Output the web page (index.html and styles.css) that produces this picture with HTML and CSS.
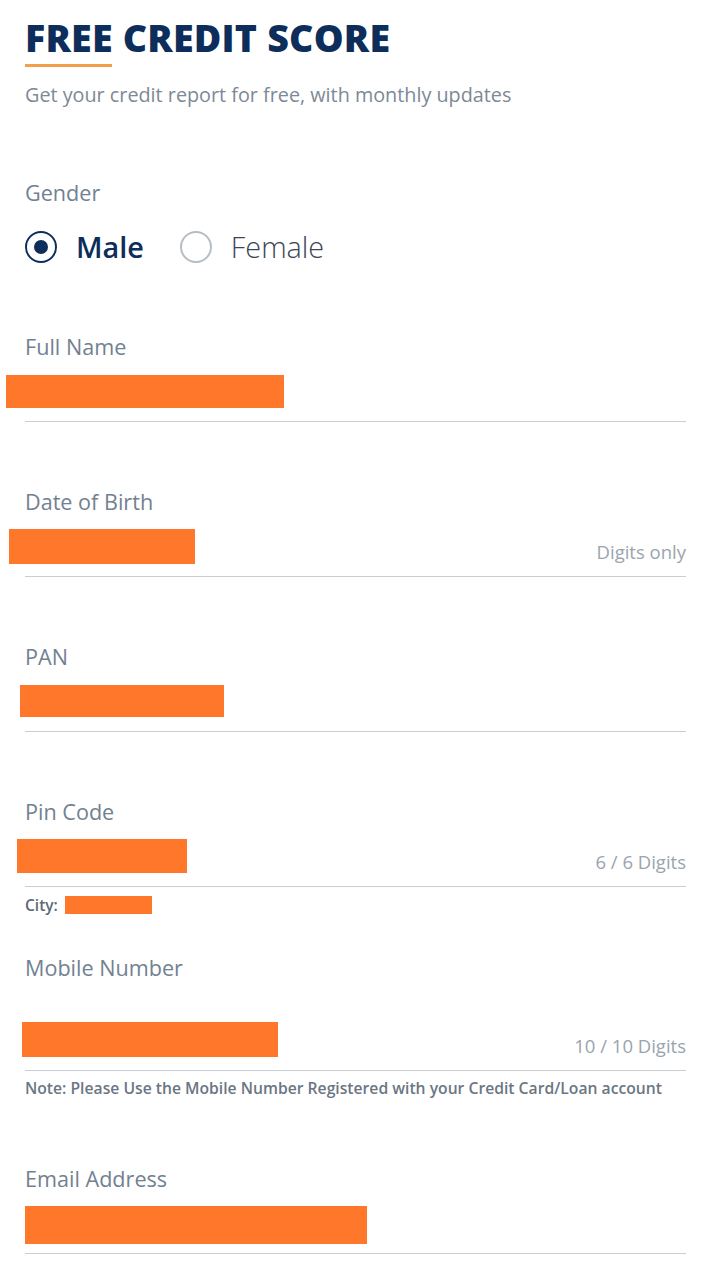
FILE: index.html
```html
<!DOCTYPE html>
<html lang="en">
<head>
  <meta charset="UTF-8" />
  <meta name="viewport" content="width=device-width, initial-scale=1.0" />
  <title>Free Credit Score</title>
  <link rel="stylesheet" href="styles.css">
</head>
<body>
  <h1 class="title">FREE CREDIT SCORE</h1>
  <div class="title-bar"></div>
  <p class="subtitle">Get your credit report for free, with monthly updates</p>

  <div class="label gender-label">Gender</div>
  <div class="radios">
    <label class="radio checked"><span class="dot"></span>Male</label>
    <label class="radio"><span class="dot"></span>Female</label>
  </div>

  <div class="field first">
    <div class="label">Full Name</div>
    <div class="row"><span class="redact r-name"></span></div>
  </div>

  <div class="field">
    <div class="label">Date of Birth</div>
    <div class="row"><span class="redact r-dob"></span><span class="hint">Digits only</span></div>
  </div>

  <div class="field">
    <div class="label">PAN</div>
    <div class="row"><span class="redact r-pan"></span></div>
  </div>

  <div class="field">
    <div class="label">Pin Code</div>
    <div class="row"><span class="redact r-pin"></span><span class="hint">6 / 6 Digits</span></div>
    <div class="city">City: <span class="redact r-city"></span></div>
  </div>

  <div class="field after-city">
    <div class="label">Mobile Number</div>
    <div class="row tall"><span class="redact r-mobile"></span><span class="hint">10 / 10 Digits</span></div>
    <div class="note">Note: Please Use the Mobile Number Registered with your Credit Card/Loan account</div>
  </div>

  <div class="field after-note">
    <div class="label">Email Address</div>
    <div class="row"><span class="redact r-email"></span></div>
  </div>
</body>
</html>
```

FILE: styles.css
```css
body {
  margin: 0;
  padding: 0 24px 0 25px;
  background: #ffffff;
  font-family: 'Open Sans', 'Noto Sans', sans-serif;
  color: #6e7c8a;
}
.title {
  margin: 0;
  padding-top: 14px;
  font-size: 37.6px;
  line-height: 48px;
  font-weight: 800;
  color: #0d2d5a;
  letter-spacing: 0.2px;
}
.title-bar {
  width: 87px;
  height: 3px;
  margin-top: 2px;
  background: #f0a04b;
}
.subtitle {
  margin: 14px 0 0;
  font-size: 19.8px;
  line-height: 28px;
  color: #7d8996;
}
.label {
  font-size: 21.6px;
  line-height: 28px;
  color: #728191;
}
.gender-label {
  margin-top: 70px;
}
.radios {
  display: flex;
  align-items: center;
  gap: 36px;
  margin-top: 20px;
}
.radio {
  display: flex;
  align-items: center;
  gap: 19px;
  font-size: 28.8px;
  line-height: 40px;
  font-weight: 300;
  color: #3a4654;
}
.radio .dot {
  width: 28px;
  height: 28px;
  border: 2px solid #b4bcc4;
  border-radius: 50%;
  display: flex;
  align-items: center;
  justify-content: center;
}
.radio.checked {
  font-weight: 600;
  color: #0d2d5a;
}
.radio.checked .dot {
  border-color: #0d2d5a;
}
.radio.checked .dot::after {
  content: "";
  width: 14px;
  height: 14px;
  border-radius: 50%;
  background: #0d2d5a;
}
.field {
  margin-top: 66px;
}
.field.first {
  margin-top: 66px;
}
.field.after-city {
  margin-top: 39px;
}
.field.after-note {
  margin-top: 67px;
}
.row {
  height: 60px;
  display: flex;
  align-items: center;
  justify-content: space-between;
  border-bottom: 1px solid #c6ced6;
}
.row.tall {
  height: 88px;
}
.hint {
  align-self: flex-end;
  padding-bottom: 12px;
  font-size: 18.5px;
  line-height: 24px;
  color: #9aa4ae;
}
.redact {
  display: block;
  background: #fe772b;
}
.r-name { width: 278px; height: 33px; margin-left: -19px; }
.r-dob { width: 186px; height: 35px; margin-left: -16px; }
.r-pan { width: 204px; height: 32px; margin-left: -5px; }
.r-pin { width: 170px; height: 34px; margin-left: -8px; }
.r-mobile { width: 256px; height: 35px; margin-left: -3px; margin-top: 27px; }
.r-email { width: 342px; height: 38px; margin-top: 4px; }
.city {
  margin-top: 8px;
  display: flex;
  align-items: center;
  gap: 7px;
  font-size: 15.5px;
  line-height: 20px;
  font-weight: 600;
  color: #5d6875;
}
.r-city {
  width: 87px;
  height: 18px;
}
.note {
  margin-top: 7px;
  font-size: 15.7px;
  line-height: 20px;
  font-weight: 600;
  color: #6b7683;
}
```
